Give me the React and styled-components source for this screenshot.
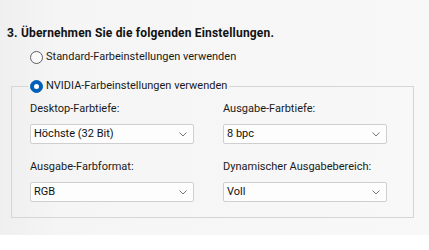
import React from 'react'
import styled, { createGlobalStyle } from 'styled-components'

const GlobalStyle = createGlobalStyle`
  html, body {
    margin: 0;
    padding: 0;
    background: #ffffff;
  }
  body {
    font-family: Roboto, 'Noto Sans', sans-serif;
    font-size: 11px;
    color: #1a1a1a;
  }
`

const Panel = styled.div`
  height: 235px;
  box-sizing: border-box;
  padding: 25px 0 0 7px;
  background: linear-gradient(to right, #efefef 0px, #f5f5f5 60px, #f8f8f8 100%);
`

const Title = styled.div`
  font-size: 12px;
  font-weight: 700;
  line-height: 16px;
  letter-spacing: 0.18px;
  color: #111;
`

const RadioRow = styled.label`
  display: flex;
  align-items: center;
  gap: 3px;
  height: 16px;
  line-height: 16px;
  margin: ${p => p.$mt || 0}px 0 0 ${p => p.$ml || 0}px;
  white-space: nowrap;
`

const RadioDot = styled.span`
  width: 13px;
  height: 13px;
  box-sizing: border-box;
  border-radius: 50%;
  flex: none;
  display: flex;
  align-items: center;
  justify-content: center;
  border: 1px solid ${p => (p.$checked ? '#005fb8' : '#5f5f5f')};
  background: ${p => (p.$checked ? '#005fb8' : '#fafafa')};

  &::after {
    content: '';
    display: ${p => (p.$checked ? 'block' : 'none')};
    width: 5px;
    height: 5px;
    border-radius: 50%;
    background: #ffffff;
  }
`

const Group = styled.fieldset`
  margin: 13px 0 0 4px;
  width: 403px;
  box-sizing: border-box;
  border: 1px solid #d6d6d6;
  padding: 7px 0 15px 18px;
`

const Legend = styled.legend`
  padding: 0 2px;
  margin-left: -2px;
`

const Grid = styled.div`
  display: grid;
  grid-template-columns: 164px 164px;
  column-gap: 29px;
  row-gap: 15px;
`

const Field = styled.div`
  display: flex;
  flex-direction: column;
  gap: 7px;
`

const Label = styled.div`
  line-height: 16px;
  white-space: nowrap;
`

const Select = styled.div`
  height: 20px;
  box-sizing: border-box;
  border: 1px solid #cfcfcf;
  border-radius: 2px;
  background: #fdfdfd;
  display: flex;
  align-items: center;
  justify-content: space-between;
  padding: 0 5px 0 3px;
  line-height: 16px;
  color: #111;
`

const Chevron = () => (
  <svg width="8" height="5" viewBox="0 0 8 5" style={{ marginRight: 1 }}>
    <path d="M0.5 0.5 L4 4 L7.5 0.5" fill="none" stroke="#777" strokeWidth="1" />
  </svg>
)

const Dropdown = ({ label, value }) => (
  <Field>
    <Label>{label}</Label>
    <Select>
      <span>{value}</span>
      <Chevron />
    </Select>
  </Field>
)

export default function App() {
  return (
    <>
      <GlobalStyle />
      <Panel>
        <Title>3. Übernehmen Sie die folgenden Einstellungen.</Title>
        <RadioRow $mt={8} $ml={23}>
          <RadioDot />
          Standard-Farbeinstellungen verwenden
        </RadioRow>
        <Group>
          <Legend>
            <RadioRow>
              <RadioDot $checked />
              NVIDIA-Farbeinstellungen verwenden
            </RadioRow>
          </Legend>
          <Grid>
            <Dropdown label="Desktop-Farbtiefe:" value="Höchste (32 Bit)" />
            <Dropdown label="Ausgabe-Farbtiefe:" value="8 bpc" />
            <Dropdown label="Ausgabe-Farbformat:" value="RGB" />
            <Dropdown label="Dynamischer Ausgabebereich:" value="Voll" />
          </Grid>
        </Group>
      </Panel>
    </>
  )
}
